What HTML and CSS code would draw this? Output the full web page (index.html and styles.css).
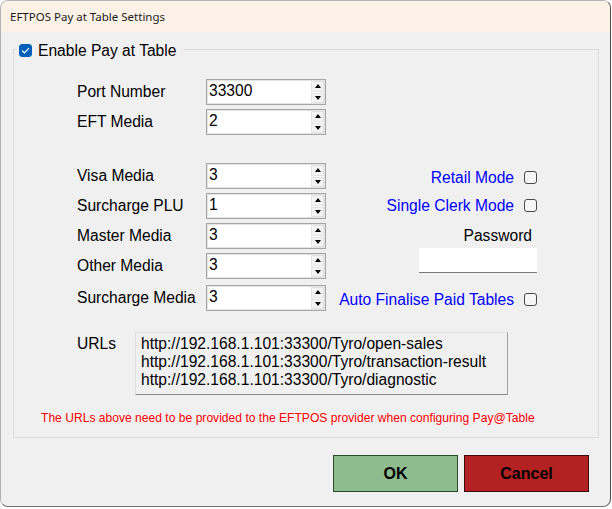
FILE: index.html
```html
<!DOCTYPE html>
<html>
<head>
  <title>EFTPOS Pay at Table Settings</title>
  <link rel="stylesheet" href="styles.css">
</head>
<body>
  <div class="window">
    <div class="titlebar">EFTPOS Pay at Table Settings</div>

    <div class="client">
      <fieldset class="group">
        <legend class="group-legend">
          <span class="check check-on">
            <svg width="9" height="7" viewBox="0 0 9 7"><path d="M1 3.6 L3.4 5.8 L8 1.2" fill="none" stroke="#fff" stroke-width="1.2"/></svg>
          </span>
          Enable Pay at Table
        </legend>

        <div class="fields fields-top">
          <div class="field">
            <span class="field-label">Port Number</span>
            <div class="spin"><span class="spin-value">33300</span><span class="spin-btns"><span class="spin-btn"><i class="arrow-up"></i></span><span class="spin-btn"><i class="arrow-down"></i></span></span></div>
          </div>
          <div class="field">
            <span class="field-label">EFT Media</span>
            <div class="spin"><span class="spin-value">2</span><span class="spin-btns"><span class="spin-btn"><i class="arrow-up"></i></span><span class="spin-btn"><i class="arrow-down"></i></span></span></div>
          </div>
        </div>

        <div class="middle">
          <div class="fields">
            <div class="field">
              <span class="field-label">Visa Media</span>
              <div class="spin"><span class="spin-value">3</span><span class="spin-btns"><span class="spin-btn"><i class="arrow-up"></i></span><span class="spin-btn"><i class="arrow-down"></i></span></span></div>
            </div>
            <div class="field">
              <span class="field-label">Surcharge PLU</span>
              <div class="spin"><span class="spin-value">1</span><span class="spin-btns"><span class="spin-btn"><i class="arrow-up"></i></span><span class="spin-btn"><i class="arrow-down"></i></span></span></div>
            </div>
            <div class="field">
              <span class="field-label">Master Media</span>
              <div class="spin"><span class="spin-value">3</span><span class="spin-btns"><span class="spin-btn"><i class="arrow-up"></i></span><span class="spin-btn"><i class="arrow-down"></i></span></span></div>
            </div>
            <div class="field">
              <span class="field-label">Other Media</span>
              <div class="spin"><span class="spin-value">3</span><span class="spin-btns"><span class="spin-btn"><i class="arrow-up"></i></span><span class="spin-btn"><i class="arrow-down"></i></span></span></div>
            </div>
            <div class="field field-last">
              <span class="field-label">Surcharge Media</span>
              <div class="spin"><span class="spin-value">3</span><span class="spin-btns"><span class="spin-btn"><i class="arrow-up"></i></span><span class="spin-btn"><i class="arrow-down"></i></span></span></div>
            </div>
          </div>

          <div class="options">
            <div class="option">Retail Mode <span class="check"></span></div>
            <div class="option">Single Clerk Mode <span class="check"></span></div>
            <div class="password-label">Password</div>
            <div class="password-input"></div>
            <div class="option option-auto">Auto Finalise Paid Tables <span class="check"></span></div>
          </div>
        </div>

        <div class="urls">
          <span class="urls-label">URLs</span>
          <div class="urls-box">
            <div>http://192.168.1.101:33300/Tyro/open-sales</div>
            <div>http://192.168.1.101:33300/Tyro/transaction-result</div>
            <div>http://192.168.1.101:33300/Tyro/diagnostic</div>
          </div>
        </div>

        <p class="note">The URLs above need to be provided to the EFTPOS provider when configuring Pay@Table</p>
      </fieldset>

      <div class="buttons">
        <button class="btn btn-ok">OK</button>
        <button class="btn btn-cancel">Cancel</button>
      </div>
    </div>
  </div>
</body>
</html>
```

FILE: styles.css
```css
body {
  margin: 0;
  background: #ffffff;
  font-family: "Liberation Sans", Arial, sans-serif;
  font-size: 15.6px;
  color: #000000;
}

.window {
  width: 611px;
  height: 507px;
  box-sizing: border-box;
  border: 1px solid #b4b4b4;
  border-right-color: #4c4c4c;
  border-bottom-color: #707070;
  border-radius: 8px;
  background: #f0f0f0;
  overflow: hidden;
}

.titlebar {
  height: 31px;
  line-height: 31px;
  padding-left: 9px;
  background: #fbf1e7;
  font-family: "Noto Sans", sans-serif;
  font-size: 11.5px;
  color: #1b1b1b;
}

.client {
  padding: 0 20px 0 12px;
}

/* group box */
.group {
  width: 586px;
  box-sizing: border-box;
  margin: 6px 0 0;
  padding: 19px 0 12px 0;
  border: 1px solid #dcdcdc;
}

.group-legend {
  display: flex;
  align-items: center;
  height: 22px;
  box-sizing: border-box;
  margin-left: 3px;
  padding: 3px 8px 0 2px;
  font-size: 15.6px;
}

.check {
  display: inline-flex;
  align-items: center;
  justify-content: center;
  width: 13px;
  height: 13px;
  box-sizing: border-box;
  border: 1px solid #4a4a4a;
  border-radius: 3px;
  background: #f6f6f6;
}

.group-legend .check {
  margin-right: 6px;
}

.check-on {
  border-color: #005fb8;
  background: #005fb8;
}

/* spin fields */
.fields {
  display: flex;
  flex-direction: column;
  gap: 4px;
}

.fields-top {
  padding-left: 63px;
}

.field {
  display: flex;
  align-items: center;
  height: 26px;
}

.field-last {
  margin-top: 2px;
}

.field-label {
  width: 129px;
  padding-bottom: 1px;
}

.spin {
  display: flex;
  justify-content: space-between;
  width: 120px;
  height: 26px;
  box-sizing: border-box;
  border: 1px solid #a6a6a6;
  box-shadow: inset 0 0 0 1px #e4e4e4;
  background: #ffffff;
}

.spin-value {
  padding: 1px 0 0 2px;
  line-height: 20px;
}

.spin-btns {
  display: flex;
  flex-direction: column;
  gap: 1px;
  padding: 1px 1px 1px 0;
}

.spin-btn {
  display: flex;
  align-items: center;
  justify-content: center;
  width: 13px;
  flex: 1;
  box-sizing: border-box;
  border: 1px solid #e2e2e2;
  background: #f3f3f3;
}

.arrow-up,
.arrow-down {
  width: 0;
  height: 0;
  border-left: 3px solid transparent;
  border-right: 3px solid transparent;
}

.arrow-up {
  border-bottom: 4px solid #000000;
}

.arrow-down {
  border-top: 4px solid #000000;
}

/* middle block */
.middle {
  display: flex;
  margin-top: 28px;
  padding-left: 63px;
}

.options {
  display: flex;
  flex-direction: column;
  align-items: flex-end;
  width: 211px;
}

.option {
  display: flex;
  align-items: center;
  gap: 10px;
  height: 28px;
  padding-top: 1px;
  box-sizing: border-box;
  color: #0000ff;
}

.password-label {
  margin-top: 8px;
  padding-right: 5px;
  line-height: 18px;
}

.password-input {
  width: 118px;
  height: 25px;
  margin-top: 3px;
  box-sizing: border-box;
  background: #ffffff;
  border-bottom: 1px solid #7a7a7a;
}

.option-auto {
  margin-top: 12px;
}

/* urls */
.urls {
  display: flex;
  margin-top: 19px;
  padding-left: 63px;
}

.urls-label {
  width: 58px;
  padding-top: 3px;
  line-height: 18px;
}

.urls-box {
  width: 373px;
  box-sizing: border-box;
  padding: 2px 5px 5px;
  border: 1px solid #e0e0e0;
  border-right-color: #a0a0a0;
  border-bottom-color: #8a8a8a;
  line-height: 18px;
}

.note {
  margin: 16px 0 0;
  padding-left: 27px;
  font-size: 12.1px;
  line-height: 14px;
  color: #ff0000;
}

/* dialog buttons */
.buttons {
  display: flex;
  justify-content: flex-end;
  gap: 6px;
  margin-top: 17px;
  padding-right: 1px;
}

.btn {
  width: 125px;
  height: 37px;
  font-family: "Liberation Sans", Arial, sans-serif;
  font-size: 16px;
  font-weight: bold;
  color: #000000;
  border: 1px solid;
  cursor: pointer;
}

.btn-ok {
  background: #8fbc8f;
  border-color: #2b4a2b;
}

.btn-cancel {
  background: #b22222;
  border-color: #3c0b0b;
}
```
